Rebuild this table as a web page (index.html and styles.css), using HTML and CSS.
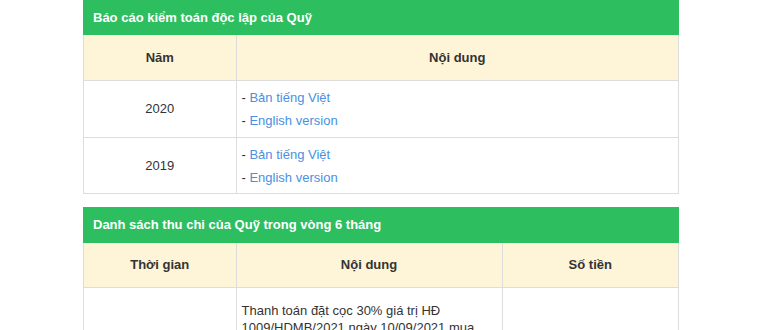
FILE: index.html
```html
<!DOCTYPE html>
<html lang="vi">
<head>
<meta charset="utf-8">
<link rel="stylesheet" href="styles.css">
</head>
<body>
<div class="page">
  <section class="panel panel-first">
    <h3 class="panel-title">Báo cáo kiểm toán độc lập của Quỹ</h3>
    <table class="tbl">
      <colgroup><col class="c-year"><col></colgroup>
      <thead>
        <tr><th>Năm</th><th>Nội dung</th></tr>
      </thead>
      <tbody>
        <tr>
          <td class="center">2020</td>
          <td class="links">
            <div class="link-line">- <a href="#">Bản tiếng Việt</a></div>
            <div class="link-line">- <a href="#">English version</a></div>
          </td>
        </tr>
        <tr>
          <td class="center">2019</td>
          <td class="links">
            <div class="link-line">- <a href="#">Bản tiếng Việt</a></div>
            <div class="link-line">- <a href="#">English version</a></div>
          </td>
        </tr>
      </tbody>
    </table>
  </section>

  <section class="panel">
    <h3 class="panel-title">Danh sách thu chi của Quỹ trong vòng 6 tháng</h3>
    <table class="tbl">
      <colgroup><col class="c-year"><col class="c-content"><col></colgroup>
      <thead>
        <tr><th>Thời gian</th><th>Nội dung</th><th>Số tiền</th></tr>
      </thead>
      <tbody>
        <tr>
          <td class="center"></td>
          <td class="desc">Thanh toán đặt cọc 30% giá trị HĐ 1009/HDMB/2021 ngày 10/09/2021 mua máy thở cho bệnh viện dã chiến</td>
          <td class="center"></td>
        </tr>
      </tbody>
    </table>
  </section>
</div>
</body>
</html>
```
FILE: styles.css
```css
* { box-sizing: border-box; }
html, body { margin: 0; padding: 0; background: #fff; }
body {
  font-family: "Liberation Sans", Arial, sans-serif;
  font-size: 13px;
  color: #333;
}
.page {
  width: 596px;
  margin-left: 83px;
  display: flex;
  flex-direction: column;
  gap: 13px;
}
.panel {
  border: 1px solid #ddd;
  border-top: 0;
}
.panel-title {
  margin: 0;
  background: #2dbe60;
  color: #fff;
  font-size: 13px;
  font-weight: bold;
  height: 36px;
  line-height: 36px;
  padding: 0 10px;
  margin: 0 -1px;
}
.panel-first .panel-title { height: 35px; line-height: 35px; }
.tbl {
  width: 100%;
  border-collapse: collapse;
  table-layout: fixed;
}
.c-year { width: 152px; }
.c-content { width: 266px; }
.tbl th {
  background: #fef5d9;
  font-weight: bold;
  color: #333;
  height: 45px;
  text-align: center;
  border-left: 1px solid #ddd;
  border-bottom: 1px solid #ddd;
}
.tbl td {
  border-left: 1px solid #ddd;
  border-top: 1px solid #ddd;
  vertical-align: middle;
}
.tbl th:first-child, .tbl td:first-child { border-left: 0; }
.center { text-align: center; }
.links { padding: 5px; }
.tbl tbody tr:last-child .links { padding-bottom: 4px; }
.link-line { line-height: 23px; }
a { color: #4a90e2; text-decoration: none; }
.desc { padding: 14px 5px 12px; line-height: 17px; vertical-align: top; }
```
